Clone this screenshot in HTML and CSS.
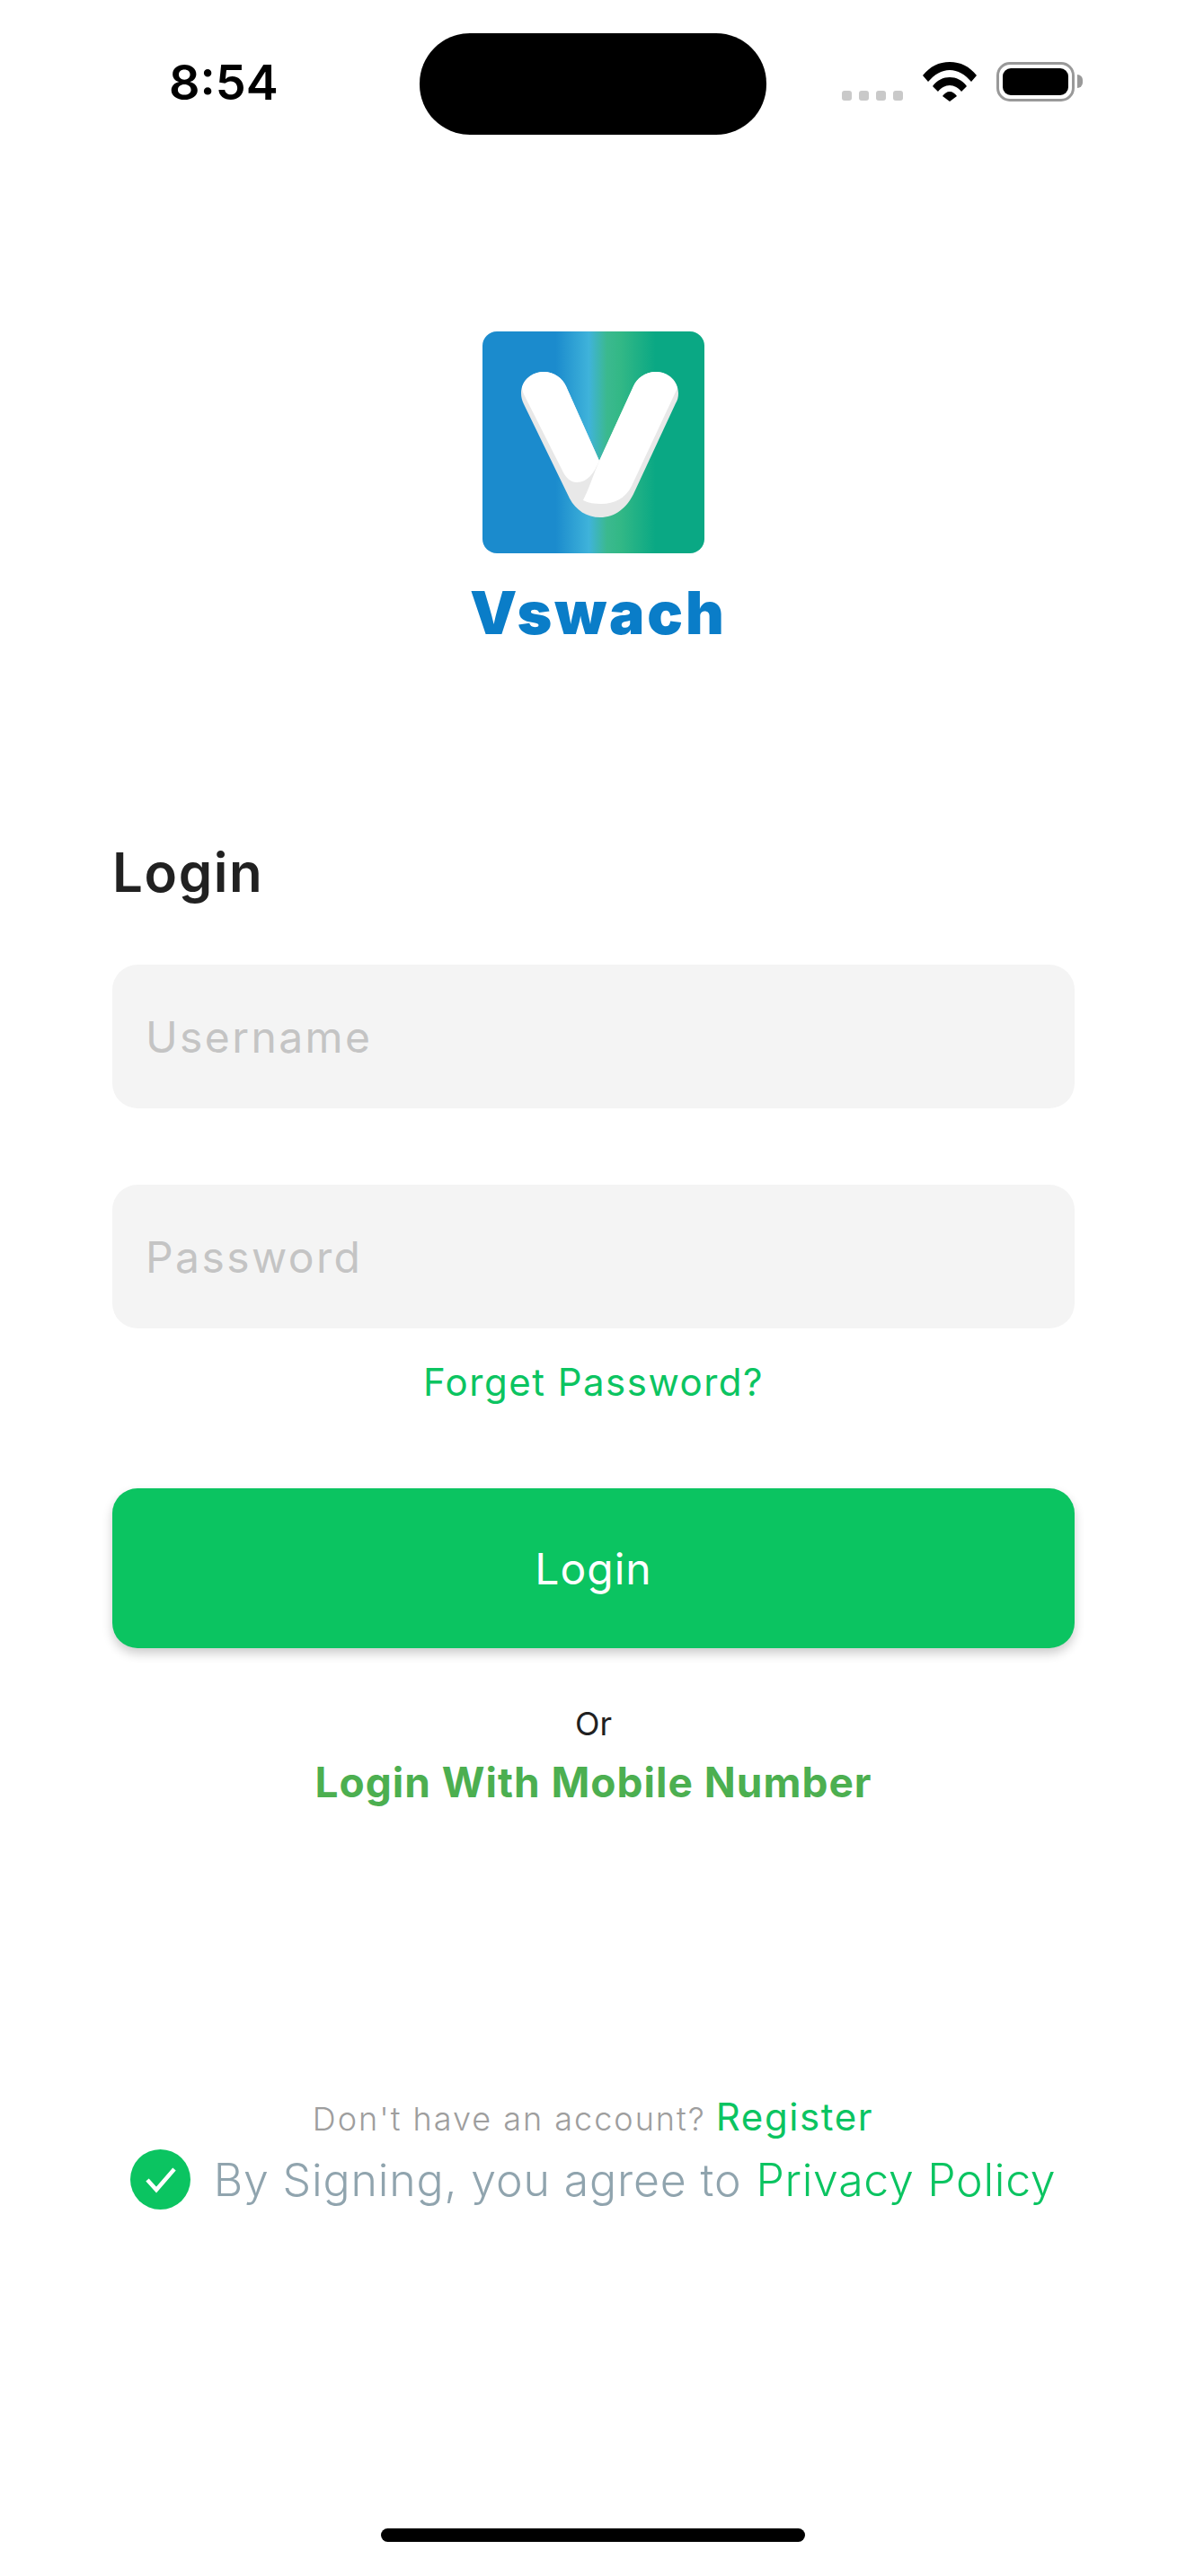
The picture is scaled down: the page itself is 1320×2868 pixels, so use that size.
FILE: index.html
```html
<!DOCTYPE html>
<html lang="en">
<head>
<meta charset="utf-8">
<title>Vswach Login</title>
<link rel="stylesheet" href="styles.css">
</head>
<body>
<div class="screen">
  <header class="status">
    <span class="time">8:54</span>
    <div class="island"></div>
    <div class="status-icons">
      <div class="dots"><i></i><i></i><i></i><i></i></div>
      <svg class="wifi" viewBox="0 0 60 44" aria-hidden="true">
        <path d="M0 15 C8 5 18 0 30 0 C42 0 52 5 60 15 L54 22 C47 14 39 9 30 9 C21 9 13 14 6 22Z" fill="#000"/>
        <path d="M11 27 C16 20 23 17 30 17 C37 17 44 20 49 27 L43 33 C40 29 35 26 30 26 C25 26 20 29 17 33Z" fill="#000"/>
        <path d="M22 38 C24 35 27 33 30 33 C33 33 36 35 38 38 L30 44Z" fill="#000"/>
      </svg>
      <div class="battery"><div class="battery-fill"></div></div>
      <div class="battery-nub"></div>
    </div>
  </header>

  <div class="brand">
    <svg class="logo" viewBox="0 0 247 247" aria-label="Vswach logo">
      <defs>
        <linearGradient id="lg" x1="0" y1="0" x2="1" y2="0">
          <stop offset="0" stop-color="#1b8bcd"/>
          <stop offset="0.33" stop-color="#1b8bcd"/>
          <stop offset="0.48" stop-color="#3fb3da"/>
          <stop offset="0.56" stop-color="#3bb98f"/>
          <stop offset="0.62" stop-color="#33b886"/>
          <stop offset="0.78" stop-color="#0aa884"/>
          <stop offset="1" stop-color="#0aa884"/>
        </linearGradient>
      </defs>
      <rect width="247" height="247" rx="16" fill="url(#lg)"/>
      <path fill="#e8e8e8" d="M43 69 C43 54 55 45 68 45 C80 45 89 52 93 61 L130 144 L168 61 C172 52 181 45 193 45 C208 45 218 56 218 69 C218 73 217 77 215 80 L169 179 C161 197 147 207 131 207 C116 207 104 199 97 186 L46 81 C44 77 43 73 43 69Z"/>
      <path fill="#ffffff" d="M44 62 C47 52 57 45 68 45 C80 45 89 52 93 61 L130 144 C124 158 117 168 105 168 C98 168 93 163 90 157 L47 72 C45 68 44 65 44 62Z"/>
      <path fill="#ffffff" d="M130 144 L168 61 C172 52 181 45 193 45 C204 45 214 52 217 63 L166 172 C159 186 147 192 132 192 C125 192 118 191 112 188 C119 174 124 158 130 144Z"/>
    </svg>
    <div class="brand-name">Vswach</div>
  </div>

  <main class="form">
    <h1 class="title">Login</h1>
    <input class="field" type="text" placeholder="Username">
    <input class="field field-second" type="password" placeholder="Password">
    <a class="forgot">Forget Password?</a>
    <button class="btn" type="button">Login</button>
    <div class="or">Or</div>
    <a class="mobile">Login With Mobile Number</a>
  </main>

  <footer class="foot">
    <div class="register"><span class="muted">Don't have an account?</span> <a class="green">Register</a></div>
    <div class="agree">
      <svg class="check" viewBox="0 0 67 67" aria-hidden="true">
        <circle cx="33.5" cy="33.5" r="33.5" fill="#0bc461"/>
        <path d="M19 34 L29 45 L49 22" fill="none" stroke="#fff" stroke-width="4.5"/>
      </svg>
      <span class="agree-text">By Signing, you agree to</span>
      <a class="agree-link">Privacy Policy</a>
    </div>
  </footer>

  <div class="home"></div>
</div>
</body>
</html>
```
FILE: styles.css
```css
* { box-sizing: border-box; }
html, body { margin: 0; padding: 0; background: #fff; }
body { font-family: Inter, "Liberation Sans", sans-serif; }

.screen {
  width: 1320px;
  height: 2868px;
  display: flex;
  flex-direction: column;
  position: relative;
  overflow: hidden;
}

.status {
  display: flex;
  align-items: flex-start;
  padding: 37px 0 0 188px;
  height: 150px;
}
.time {
  width: 279px;
  margin-top: 28px;
  font-family: Inter, sans-serif;
  font-size: 54px;
  line-height: 54px;
  font-weight: 600;
  color: #000;
}
.island { width: 386px; height: 113px; border-radius: 56px; background: #000; }
.status-icons { display: flex; align-items: flex-end; margin-left: 84px; height: 76px; }
.dots { display: flex; gap: 8px; margin-bottom: 1px; }
.dots i { width: 11px; height: 11px; border-radius: 3px; background: #c9c9c9; display: block; }
.wifi { width: 60px; height: 44px; margin-left: 22px; }
.battery {
  width: 87px; height: 44px; margin-left: 22px;
  border: 3px solid #999; border-radius: 15px; padding: 4px;
}
.battery-fill { width: 100%; height: 100%; background: #000; border-radius: 9px; }
.battery-nub {
  width: 6px; height: 15px; margin: 0 0 15px 3px;
  background: #999; border-radius: 0 8px 8px 0;
}

.brand {
  display: flex; flex-direction: column; align-items: center;
  margin-top: 219px; padding-left: 12px;
}
.logo { width: 247px; height: 247px; display: block; margin-left: -12px; }
.brand-name {
  margin-top: 30px;
  font-size: 66px; line-height: 72px; font-weight: 900;
  color: #0a7dc8; letter-spacing: 3px;
}

.form { display: flex; flex-direction: column; align-items: center; padding: 0 124px 0 125px; margin-top: 213px; }
.title {
  align-self: flex-start;
  margin: 0;
  font-size: 60px; line-height: 80px; font-weight: 600; color: #212121; letter-spacing: 1.6px;
}
.field {
  width: 100%; height: 160px; margin-top: 63px;
  border: 0; outline: 0; border-radius: 28px;
  background: #f4f4f4; padding: 0 37px;
  font-family: inherit; font-size: 48px; color: #222; letter-spacing: 2.4px;
}
.field-second { margin-top: 85px; }
.field::placeholder { color: #c4c4c4; opacity: 1; }
.forgot { margin-top: 30px; font-size: 42px; line-height: 60px; color: #0bc461; letter-spacing: 1.5px; }
.btn {
  width: 100%; height: 178px; margin-top: 88px;
  border: 0; border-radius: 28px;
  background: #0bc461; color: #fff;
  font-family: inherit; font-size: 48px; letter-spacing: 1px;
  box-shadow: 0 6px 12px rgba(0,0,0,.2);
}
.or { margin-top: 59px; font-size: 36px; line-height: 50px; color: #212121; }
.mobile { margin-top: 10px; font-size: 46px; line-height: 60px; font-weight: 700; color: #4caf50; letter-spacing: 1px; }

.foot { display: flex; flex-direction: column; align-items: center; margin-top: 318px; }
.register { display: flex; align-items: baseline; gap: 11px; line-height: 50px; }
.muted { color: #9e9e9e; font-size: 36px; font-weight: 300; letter-spacing: 2px; }
.green { color: #0bc461; font-size: 42px; letter-spacing: 1.6px; }
.agree { display: flex; align-items: center; margin-top: 9px; }
.check { width: 67px; height: 67px; margin-right: 26px; }
.agree-text { font-size: 50px; color: #90a4ae; font-weight: 300; letter-spacing: 0.85px; }
.agree-link { font-size: 50px; color: #0bc461; margin-left: 16px; font-weight: 300; letter-spacing: 0.7px; }

.home {
  position: absolute; left: 424px; bottom: 38px;
  width: 472px; height: 15px; border-radius: 8px; background: #000;
}
```
